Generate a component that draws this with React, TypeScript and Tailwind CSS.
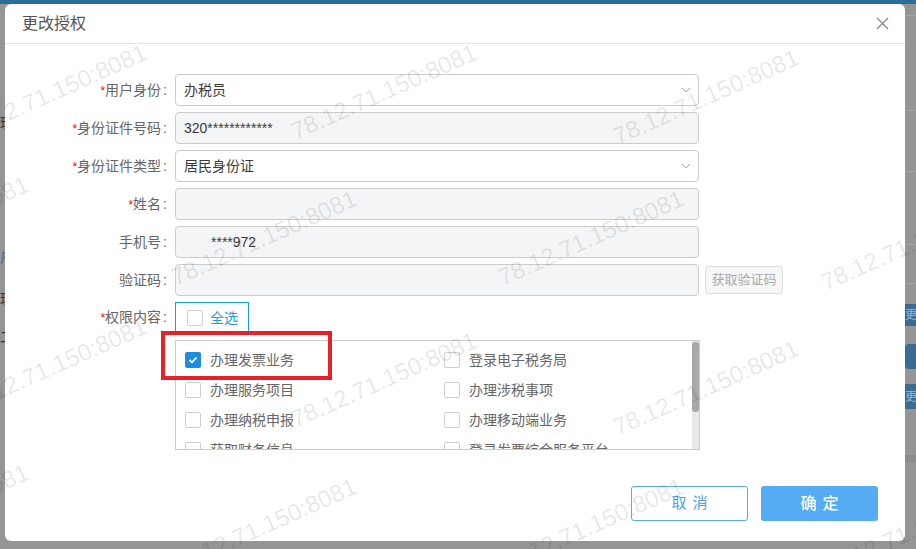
import React from "react";

// watermark tiles: center points on the page
const WATERMARKS = [
  { x: 54, y: 92 },
  { x: 384, y: 92 },
  { x: 706, y: 97 },
  { x: -64, y: 224 },
  { x: 264, y: 238 },
  { x: 591, y: 238 },
  { x: 914, y: 243 },
  { x: 54, y: 366 },
  { x: 384, y: 380 },
  { x: 706, y: 388 },
  { x: -64, y: 512 },
  { x: 264, y: 526 },
  { x: 591, y: 526 },
  { x: 914, y: 530 },
];

const PERMISSIONS: [string, boolean][] = [
  ["办理发票业务", true],
  ["登录电子税务局", false],
  ["办理服务项目", false],
  ["办理涉税事项", false],
  ["办理纳税申报", false],
  ["办理移动端业务", false],
  ["获取财务信息", false],
  ["登录发票综合服务平台", false],
  ["办理社保业务", false],
  ["查询涉税信息", false],
];

const Chevron = () => (
  <svg width="10" height="6" viewBox="0 0 10 6" className="mr-[7px]">
    <polyline points="1,1 5,5 9,1" fill="none" stroke="#aaa" strokeWidth="1" />
  </svg>
);

const Box = ({ checked }: { checked?: boolean }) =>
  checked ? (
    <span className="flex h-[16px] w-[16px] items-center justify-center rounded-[2px] bg-[#1d8ce0]">
      <svg width="10" height="8" viewBox="0 0 10 8">
        <polyline points="1.5,4 4,6.3 8.5,1.5" fill="none" stroke="#fff" strokeWidth="1.8" />
      </svg>
    </span>
  ) : (
    <span className="h-[16px] w-[16px] rounded-[2px] border border-[#cfcfcf] bg-white" />
  );

const Label = ({ text, required }: { text: string; required?: boolean }) => (
  <div className="w-[162px] shrink-0 text-right text-[14px] text-[#666]">
    {required && <span className="text-[12px] text-[#f00]">*</span>}
    {text}
    <span className="ml-[2px]">:</span>
  </div>
);

const Field = ({
  label,
  required,
  value,
  disabled,
  select,
  indent,
  children,
}: {
  label: string;
  required?: boolean;
  value?: string;
  disabled?: boolean;
  select?: boolean;
  indent?: boolean;
  children?: React.ReactNode;
}) => (
  <div className="flex h-[32px] items-center">
    <Label text={label} required={required} />
    <div
      className={
        "ml-[8px] flex h-[32px] w-[524px] items-center justify-between rounded-[4px] border border-[#ccc] text-[14px] text-[#3a3a3a] " +
        (disabled ? "bg-[#f4f5f7]" : "bg-white")
      }
    >
      <span className={indent ? "pl-[35px]" : "pl-[8px]"}>{value}</span>
      {select && <Chevron />}
    </div>
    {children}
  </div>
);

export default function App() {
  return (
    <div className="relative h-[549px] w-[916px] overflow-hidden bg-[#959595] font-['Liberation_Sans','Noto_Sans_CJK_SC',sans-serif]">
      {/* page under the overlay */}
      <div className="h-[4px] bg-[#2b6f99]" />
      <div className="flex h-[545px] justify-between">
        <div className="flex w-[5px] flex-col overflow-hidden text-[14px] leading-none text-[#333]">
          <div className="mt-[112px]">理</div>
          <div className="mt-[120px] text-[#2b6f99]">户</div>
          <div className="mt-[28px]">理</div>
          <div className="mt-[24px]">二</div>
        </div>
        <div className="flex w-[11px] flex-col overflow-hidden text-[12px] leading-none">
          <div className="mt-[11px] h-px bg-[#a4a4a4]" />
          <div className="mt-[94px] h-px bg-[#a0a0a0]" />
          <div className="mt-[60px] h-px bg-[#a0a0a0]" />
          <div className="mt-[72px] h-px bg-[#a0a0a0]" />
          <div className="mt-[38px] h-px bg-[#a0a0a0]" />
          <div className="mt-[20px] flex h-[22px] items-center bg-[#3a6c93] whitespace-nowrap text-[#9fb5c8]">更改</div>
          <div className="mt-[18px] h-[25px] rounded-l-[4px] bg-[#3a6c93]" />
          <div className="mt-[15px] flex h-[25px] items-center bg-[#3a6c93] whitespace-nowrap text-[#9fb5c8]">更改</div>
          <div className="mt-[46px] h-[7px] bg-[#8a8a8a]" />
        </div>
      </div>

      {/* dialog */}
      <div className="absolute left-[5px] top-[4px] flex h-[537px] w-[900px] flex-col rounded-[6px] bg-white">
        <div className="flex h-[40px] items-center justify-between border-b border-[#e5e5e5] pl-[17px] pr-[16px]">
          <span className="text-[16px] text-[#555]">更改授权</span>
          <svg width="13" height="13" viewBox="0 0 13 13">
            <line x1="1" y1="1" x2="12" y2="12" stroke="#888" strokeWidth="1.3" />
            <line x1="12" y1="1" x2="1" y2="12" stroke="#888" strokeWidth="1.3" />
          </svg>
        </div>

        <div className="flex flex-col gap-[6px] pt-[30px]">
          <Field label="用户身份" required value="办税员" select />
          <Field label="身份证件号码" required value="320************" disabled />
          <Field label="身份证件类型" required value="居民身份证" select />
          <Field label="姓名" required disabled />
          <Field label="手机号" value="****972" disabled indent />
          <Field label="验证码" disabled>
            <div className="ml-[6px] flex h-[28px] w-[78px] items-center justify-center rounded-[3px] border border-[#ddd] bg-[#f7f7f7] text-[13px] text-[#aaa]">
              获取验证码
            </div>
          </Field>

          <div className="flex flex-col">
            <div className="flex h-[31px] items-center">
              <Label text="权限内容" required />
              <div className="ml-[8px] flex h-[31px] w-[74px] items-center gap-[7px] border-x border-t border-[#1a9ee0] pl-[11px] text-[14px] text-[#1a9ee0]">
                <Box />
                全选
              </div>
            </div>
            <div className="ml-[170px] mt-[7px] flex h-[110px] w-[525px] overflow-hidden border border-[#ccc]">
              <div className="grid flex-1 grid-cols-[259px_1fr] content-start pt-[4px]">
                {PERMISSIONS.map(([name, checked]) => (
                  <div key={name} className="flex h-[30px] items-center gap-[9px] pl-[9px] text-[14px] text-[#666]">
                    <Box checked={checked} />
                    {name}
                  </div>
                ))}
              </div>
              <div className="flex w-[7px] flex-col bg-[#e8e8e8] pt-[1px]">
                <div className="h-[70px] rounded-[3px] bg-[#a9a9a9]" />
              </div>
            </div>
          </div>
        </div>

        <div className="mt-auto flex justify-end gap-[13px] pb-[20px] pr-[27px]">
          <div className="flex h-[35px] w-[117px] items-center justify-center rounded-[3px] border border-[#5aaaf0] pl-[6px] text-[15px] tracking-[6px] text-[#4aa0ee]">
            取消
          </div>
          <div className="flex h-[35px] w-[117px] items-center justify-center rounded-[3px] bg-[#55acf2] pl-[6px] text-[16px] font-medium tracking-[6px] text-white">
            确定
          </div>
        </div>

        {/* red annotation box */}
        <div className="absolute left-[156px] top-[327px] h-[49px] w-[171px] border-4 border-[#e8202a]" />
      </div>

      {/* watermark */}
      <div className="pointer-events-none absolute inset-0">
        {WATERMARKS.map((w, i) => (
          <span
            key={i}
            className="absolute -translate-x-1/2 -translate-y-1/2 -rotate-[24deg] whitespace-nowrap text-[24px] text-black/[0.1]"
            style={{ left: w.x, top: w.y }}
          >
            78.12.71.150:8081
          </span>
        ))}
      </div>
    </div>
  );
}
